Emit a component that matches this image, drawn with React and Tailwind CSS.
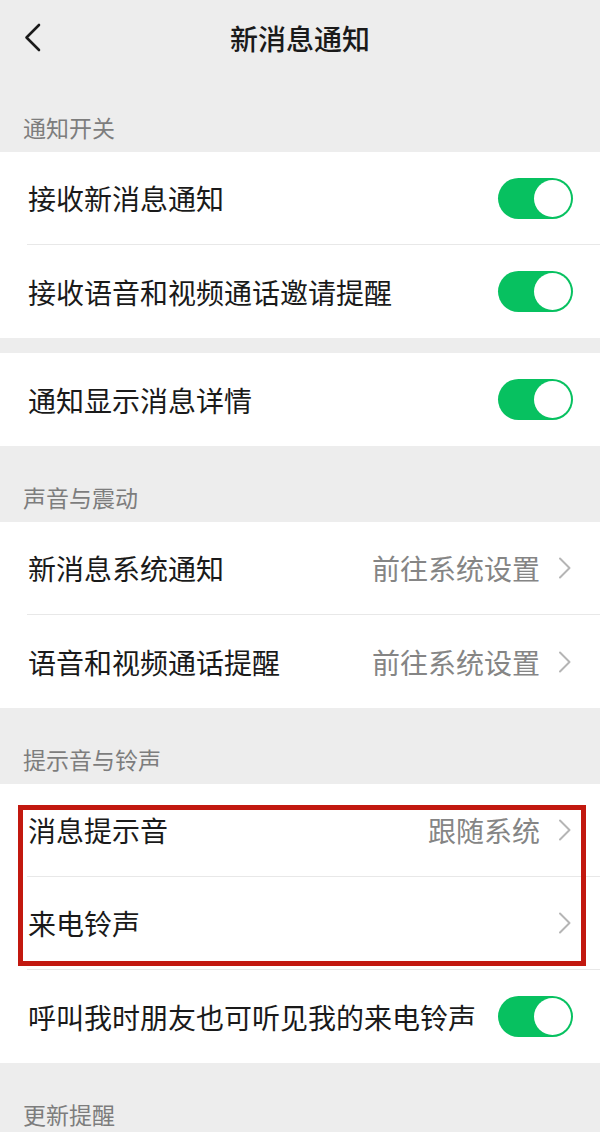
import React from 'react';

const Chevron = () => (
  <svg width="14" height="22" viewBox="0 0 14 22" className="ml-[18px] shrink-0">
    <path d="M2 1.5 L11.5 11 L2 20.5" fill="none" stroke="#b5b5b5" strokeWidth="2" strokeLinecap="round" strokeLinejoin="round" />
  </svg>
);

const Toggle = () => (
  <div className="relative w-[75px] h-[41px] rounded-full bg-[#07c160] shrink-0">
    <div className="absolute right-[2px] top-[2px] w-[37px] h-[37px] rounded-full bg-white" />
  </div>
);

const Label = ({ children }) => (
  <div className="h-[76px] pl-[23px] pt-[38px] text-[23px] leading-[26px] text-[#7d7d7d]">{children}</div>
);

const Row = ({ title, value, toggle, divider }) => (
  <div className="bg-white pl-[27px]">
    <div
      className={`h-[93px] flex items-center ${toggle ? 'pr-[27px]' : 'pr-[28px]'} ${
        divider ? 'border-b border-[#e8e8e8]' : ''
      }`}
    >
      <span className="flex-1 pl-[1px] text-[28px] leading-[34px] text-[#1a1a1a] whitespace-nowrap">{title}</span>
      {toggle ? (
        <Toggle />
      ) : (
        <div className="flex items-center">
          {value && <span className="text-[28px] leading-[34px] text-[#858585]">{value}</span>}
          <Chevron />
        </div>
      )}
    </div>
  </div>
);

export default function App() {
  return (
    <div className="w-[600px] h-[1132px] overflow-hidden bg-[#ededed] font-['Noto_Sans_CJK_SC','Noto_Sans',sans-serif]">
      {/* header */}
      <div className="h-[76px] grid grid-cols-[60px_1fr_60px] items-center">
        <div className="pl-[24px] flex items-center">
          <svg width="18" height="30" viewBox="0 0 18 30">
            <path d="M15 2 L2.5 14.5 L15 27" fill="none" stroke="#1a1a1a" strokeWidth="2.6" strokeLinecap="round" strokeLinejoin="round" />
          </svg>
        </div>
        <h1 className="text-center text-[28px] leading-[34px] font-medium text-[#1a1a1a]">新消息通知</h1>
        <div />
      </div>

      <Label>通知开关</Label>
      <Row title="接收新消息通知" toggle divider />
      <Row title="接收语音和视频通话邀请提醒" toggle />
      <div className="h-[15px]" />
      <Row title="通知显示消息详情" toggle />

      <Label>声音与震动</Label>
      <Row title="新消息系统通知" value="前往系统设置" divider />
      <Row title="语音和视频通话提醒" value="前往系统设置" />

      <Label>提示音与铃声</Label>
      <div className="relative">
        <Row title="消息提示音" value="跟随系统" divider />
        <Row title="来电铃声" divider />
        {/* annotation box */}
        <div className="absolute left-[18px] right-[14px] top-[21px] bottom-[4px] border-[5px] border-[#c2180f] pointer-events-none" />
      </div>
      <Row title="呼叫我时朋友也可听见我的来电铃声" toggle />

      <Label>更新提醒</Label>
    </div>
  );
}
